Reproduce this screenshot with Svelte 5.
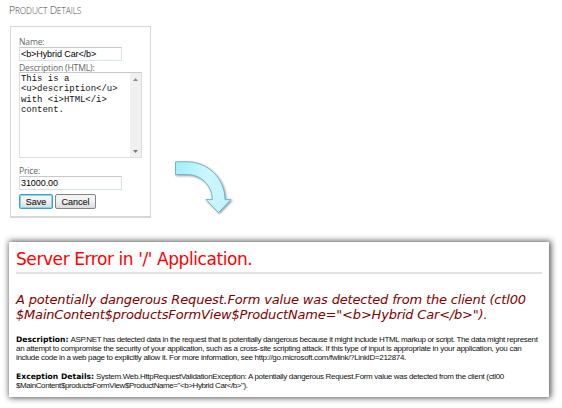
<script>
  const message = [
    { text: 'A potentially dangerous Request.Form value was detected from the client (ctl00', gap: -0.17 },
    { text: '$MainContent$productsFormView$ProductName="<b>Hybrid Car</b>").', gap: -0.19 }
  ];
  const description = [
    'ASP.NET has detected data in the request that is potentially dangerous because it might include HTML markup or script. The data might represent',
    'an attempt to compromise the security of your application, such as a cross-site scripting attack. If this type of input is appropriate in your application, you can',
    'include code in a web page to explicitly allow it. For more information, see http://go.microsoft.com/fwlink/?LinkID=212874.'
  ];
  const details = [
    'System.Web.HttpRequestValidationException: A potentially dangerous Request.Form value was detected from the client (ctl00',
    '$MainContent$productsFormView$ProductName="<b>Hybrid Car</b>").'
  ];
  const source = 'This is a\n<u>description</u>\nwith <i>HTML</i>\ncontent.';
</script>

<main>
  <h2>P<small>RODUCT</small> D<small>ETAILS</small></h2>
  <div class="top">
    <form>
      <label for="name">Name:</label>
      <div class="field" id="name">{'<b>Hybrid Car</b>'}</div>
      <label class="desc" for="desc">Description (HTML):</label>
      <div class="area" id="desc">
        <pre>{source}</pre>
        <div class="bar">
          <svg width="5" height="3" viewBox="0 0 5 3"><path d="M0 3L2.5 0L5 3Z" fill="#8b8b8b" /></svg>
          <svg width="5" height="3" viewBox="0 0 5 3"><path d="M0 0L2.5 3L5 0Z" fill="#777" /></svg>
        </div>
      </div>
      <label class="price" for="price">Price:</label>
      <div class="field" id="price">31000.00</div>
      <div class="buttons">
        <button type="button" class="save">Save</button>
        <button type="button" class="cancel">Cancel</button>
      </div>
    </form>
    <svg class="arrow" width="70" height="66" viewBox="165 155 70 66">
      <defs>
        <linearGradient id="g" x1="0" y1="0" x2="1" y2="0.3">
          <stop offset="0" stop-color="#a3edfc" />
          <stop offset="0.6" stop-color="#cdf6ff" />
          <stop offset="1" stop-color="#c4f3fe" />
        </linearGradient>
      </defs>
      <path d="M175.5 161.8H187C208 161.8 225 178.5 225 199.6H231L218.5 212.7L206 199.6H212.3C212.3 185.5 201 174.5 187 174.5H175.5Z" fill="url(#g)" stroke="#72b5c6" stroke-width="1" />
    </svg>
  </div>
  <section>
    <h1>Server Error in '/' Application.</h1>
    <hr />
    <div class="message">
      {#each message as line}<div style="letter-spacing: {line.gap}px">{line.text}</div>{/each}
    </div>
    <div class="para">
      <div><b>Description:</b> <span class="lead">{description[0]}</span></div>
      <div class="wide">{description[1]}</div>
      <div>{description[2]}</div>
    </div>
    <div class="para">
      <div><b>Exception Details:</b> <span>{details[0]}</span></div>
      <div class="tail">{details[1]}</div>
    </div>
  </section>
</main>

<style>
  :global(body) { background: #fff; }
  main { box-sizing: border-box; width: 562px; height: 408px; padding: 3px 0 0 9px; overflow: hidden; white-space: nowrap; }
  h2 { margin: 0; height: 23px; font: 300 10.5px/15px "Open Sans", sans-serif; letter-spacing: -0.25px; color: #444; }
  small { font-size: 8.3px; letter-spacing: -0.05px; }
  .top { display: flex; align-items: flex-start; height: 192px; }
  form { box-sizing: border-box; width: 141px; height: 192px; padding: 9px 8px; border: 1px solid #d8d8d8; border-bottom-width: 2px; margin-left: 1px; }
  label { display: block; height: 11px; font: 8.6px/12px "Open Sans", sans-serif; letter-spacing: -0.17px; color: #666; }
  .field { box-sizing: border-box; width: 103px; height: 14px; padding-left: 1px; border: 1px solid #d9e0e8; border-top-color: #c6c9cd; font: 9px/12px "Liberation Sans", Arial, sans-serif; letter-spacing: -0.08px; color: #000; }
  .desc { padding-top: 1px; height: 10px; }
  .area { box-sizing: border-box; display: flex; justify-content: space-between; width: 123px; height: 86px; border: 1px solid #ddd; border-top-color: #c6c9cd; }
  pre { margin: 1px 0 0 1px; font: 8.95px/10.3px "Liberation Mono", "Courier New", monospace; color: #111; }
  .bar { box-sizing: border-box; display: flex; flex-direction: column; justify-content: space-between; align-items: center; width: 11px; padding: 5px 0 4px; background: #f0f0f0; }
  .price { margin-top: 7px; }
  .buttons { display: flex; gap: 2px; margin-top: 4px; }
  button { box-sizing: border-box; height: 15px; padding: 0; border: 1px solid #858585; border-radius: 2px; background: linear-gradient(#f3f3f3 45%, #dadada); font: 9px/12px "Liberation Sans", Arial, sans-serif; color: #222; -webkit-text-stroke: 0.15px #222; }
  .save { width: 34px; border-color: #3c9dce; box-shadow: inset 0 0 0 1px #8ad4f3; }
  .cancel { width: 41px; }
  .arrow { margin: 129px 0 0 13.5px; filter: drop-shadow(1px 1.5px 1px #0006); }
  section { box-sizing: border-box; width: 540px; height: 155px; margin-top: 24px; padding: 7px; background: #fff; box-shadow: 1px 0 6px 1px #000a; }
  h1 { margin: 0; font: 400 17px/20px "DejaVu Sans", Verdana, sans-serif; letter-spacing: -0.42px; color: #f00; }
  hr { margin: 3px 0 0; width: 526px; height: 2px; border: 0; background: #e2e2e2; }
  .message { margin-top: 18px; font: italic 13px/15.3px "DejaVu Sans", Verdana, sans-serif; color: #800000; }
  .para { margin-top: 9.2px; font: 8px/9.3px "Liberation Sans", Arial, sans-serif; letter-spacing: -0.32px; color: #111; }
  .message + .para { margin-top: 12px; }
  .lead { letter-spacing: -0.345px; }
  .wide { letter-spacing: -0.29px; }
  .tail { letter-spacing: -0.41px; }
  b { font: bold 7.6px/9px "DejaVu Sans", Verdana, sans-serif; letter-spacing: 0.03px; color: #000; }
</style>
